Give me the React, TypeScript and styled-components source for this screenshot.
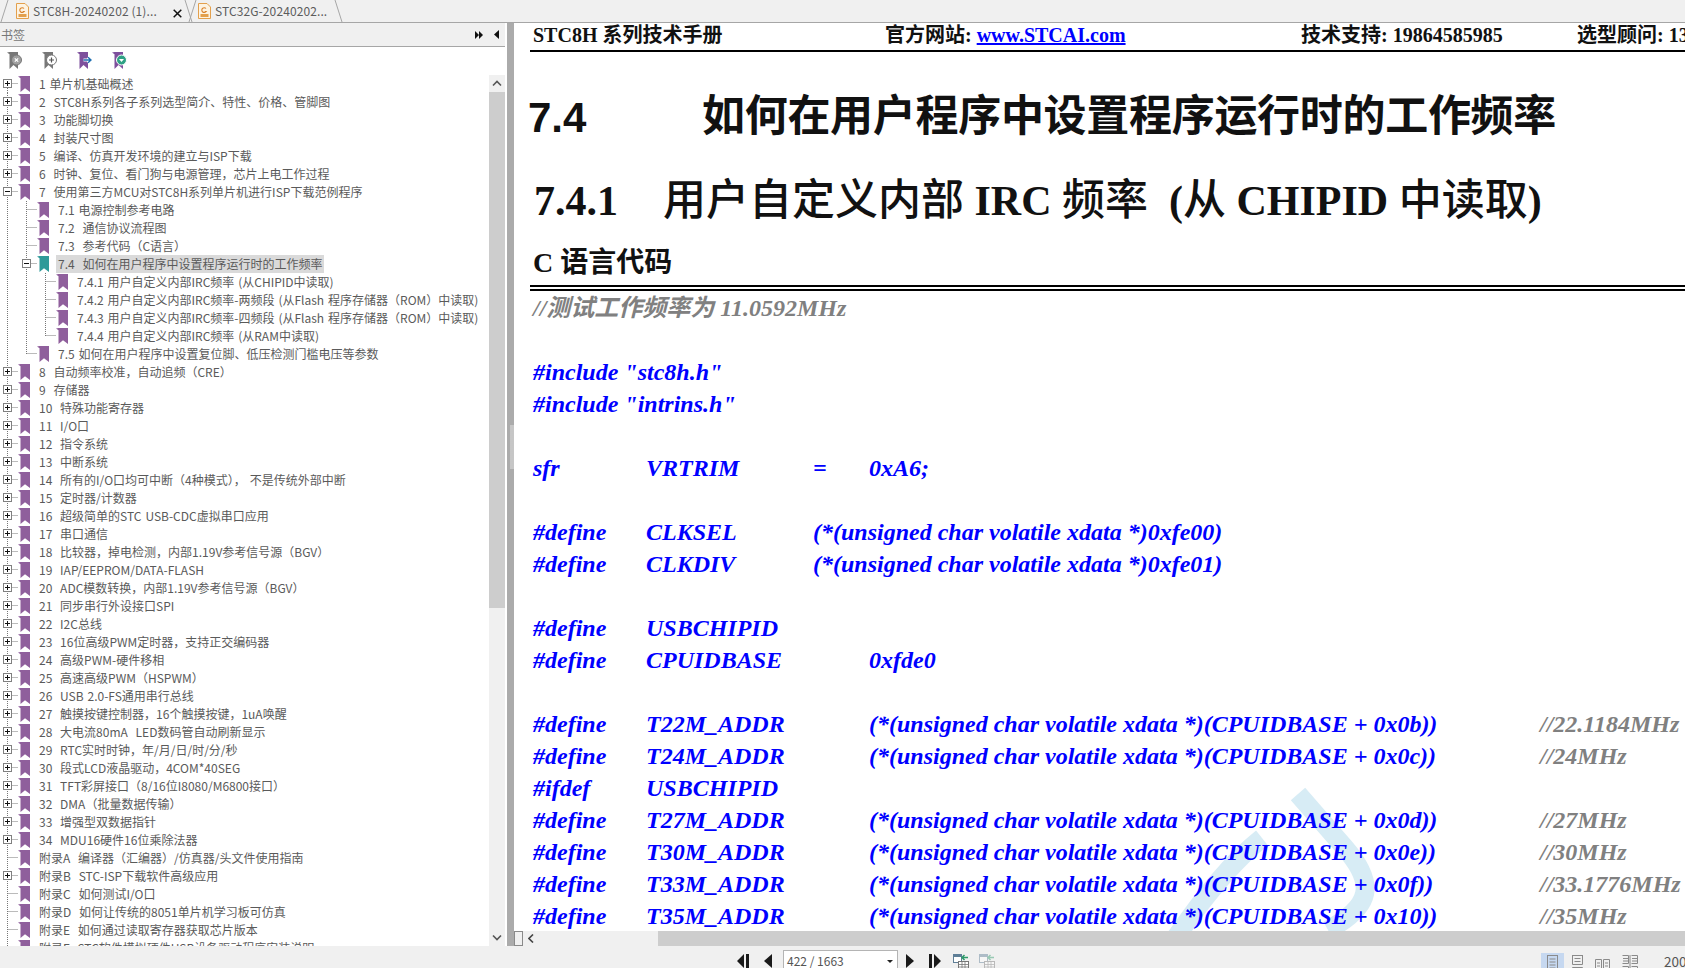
import React from "react";
import styled, { createGlobalStyle } from "styled-components";

const Global = createGlobalStyle`
  html, body { margin: 0; padding: 0; width: 100%; height: 100%; overflow: hidden; background: #fff; }
  #root { width: 100%; height: 100%; }
  * { box-sizing: border-box; }
`;

const UI_FONT = `"Noto Sans CJK SC", "Noto Sans", sans-serif`;
const DOC_FONT = `"Liberation Serif", "Noto Sans CJK SC", serif`;

const Shell = styled.div`
  width: 1685px;
  height: 968px;
  display: flex;
  flex-direction: column;
  overflow: hidden;
  background: #fff;
  font-family: ${UI_FONT};
`;

/* ---------- tabs ---------- */
const TabBar = styled.div`
  height: 23px;
  flex: none;
  display: flex;
  background: #f0f0f0;
  border-bottom: 1px solid #a6a6a6;
`;
const Tab = styled.div<{ $width: number; $overlap?: boolean }>`
  width: ${(p) => p.$width}px;
  height: 22px;
  display: flex;
  align-items: center;
  margin-left: ${(p) => (p.$overlap ? -5 : 0)}px;
`;
const TabLabel = styled.span`
  flex: 1;
  margin-left: 4px;
  font-size: 12px;
  letter-spacing: 0.1px;
  line-height: 22px;
  color: #5c5c5c;
  white-space: nowrap;
`;
const TabIconSlot = styled.span<{ $ml: number }>`
  display: flex;
  margin-left: ${(p) => p.$ml}px;
`;
const CloseSlot = styled.span`
  display: flex;
  margin: 4px 2px 0 0;
`;
const Edge = ({ flip }: { flip?: boolean }) => (
  <svg width="9" height="22" style={{ flex: "none", display: "block" }}>
    <line x1={flip ? 1 : 8} y1="0" x2={flip ? 8 : 1} y2="22" stroke="#a6a6a6" strokeWidth="1" />
  </svg>
);
const PdfIcon = () => (
  <svg width="13" height="16" viewBox="0 0 13 16" style={{ display: "block" }}>
    <path d="M1 .5H9L12.5 4V15.5H.5V.5Z" fill="#fdf3e2" stroke="#e3a04d" />
    <path d="M8 5.5a2.4 2.4 0 1 0 .2 3H6.6" fill="none" stroke="#d9822b" strokeWidth="1.1" />
    <rect x="2.5" y="11" width="8" height="3" fill="#e3a04d" />
  </svg>
);
const CloseIcon = () => (
  <svg width="9" height="9" style={{ display: "block" }}>
    <path d="M.7.7 8.3 8.3M8.3.7.7 8.3" stroke="#111" strokeWidth="1.5" />
  </svg>
);

/* ---------- body ---------- */
const Body = styled.div`
  flex: 1;
  min-height: 0;
  display: flex;
`;
const Sidebar = styled.aside`
  width: 505px;
  margin-right: 2px;
  flex: none;
  display: flex;
  flex-direction: column;
  background: #fff;
`;
const SidebarHeader = styled.div`
  height: 24px;
  flex: none;
  display: flex;
  align-items: center;
  background: #f0f0f0;
  border-bottom: 1px solid #a6a6a6;
  padding: 0 6px 0 1px;
`;
const SidebarTitle = styled.span`
  flex: 1;
  font-size: 12px;
  color: #777;
`;
const HeaderBtn = styled.span<{ $ml?: number }>`
  display: flex;
  margin-left: ${(p) => p.$ml ?? 0}px;
`;
const BookmarkTools = styled.div`
  height: 28px;
  flex: none;
  display: flex;
  align-items: flex-start;
  padding: 5px 0 0 7px;
  gap: 20px;
`;
const TreeArea = styled.div`
  flex: 1;
  min-height: 0;
  display: flex;
`;
const Tree = styled.div`
  flex: 1;
  min-width: 0;
  overflow: hidden;
`;
const Row = styled.div`
  height: 18px;
  display: flex;
  align-items: center;
`;
const Label = styled.span<{ $selected?: boolean }>`
  height: 18px;
  line-height: 18px;
  padding: 0 2px;
  font-size: 12px;
  word-spacing: 1.2px;
  color: #5a5a5a;
  white-space: pre;
  background: ${(p) => (p.$selected ? "#dadada" : "transparent")};
`;
const VScroll = styled.div`
  width: 16px;
  flex: none;
  display: flex;
  flex-direction: column;
  background: #f0f0f0;
`;
const ScrollArrow = styled.div`
  height: 17px;
  flex: none;
  display: flex;
  align-items: center;
  justify-content: center;
`;
const ScrollThumb = styled.div`
  height: 516px;
  flex: none;
  background: #cdcdcd;
`;
const ScrollTrack = styled.div`
  flex: 1;
`;
const Splitter = styled.div`
  width: 7px;
  flex: none;
  background: #ababab;
  display: flex;
  flex-direction: column;
  align-items: flex-end;
  padding-top: 402px;
`;
const Grip = styled.div`
  width: 4px;
  height: 44px;
  background-image: radial-gradient(#e4e4e4 0.6px, transparent 0.8px);
  background-size: 2px 2px;
`;

/* ---------- document ---------- */
const DocPane = styled.main`
  flex: 1;
  min-width: 0;
  display: flex;
  flex-direction: column;
`;
const Page = styled.div`
  position: relative;
  flex: 1;
  min-height: 0;
  overflow: hidden;
  background: #fff;
  padding-left: 16px;
  font-family: ${DOC_FONT};
`;
const Watermark = styled.svg`
  position: absolute;
  left: 616px;
  top: 747px;
`;
const RunHead = styled.header`
  height: 29px;
  display: grid;
  grid-template-columns: 352px 416px 276px 1fr;
  align-items: start;
  padding-left: 3px;
  border-bottom: 2px solid #000;
  font-size: 20px;
  line-height: 25px;
  font-weight: 700;
  color: #111;
  white-space: pre;
`;
const RunLink = styled.a`
  color: #0000ff;
  text-decoration: underline;
`;
const Heading1 = styled.h1`
  margin: 30px 0 0;
  height: 60px;
  display: flex;
  align-items: center;
  font-size: 43px;
  letter-spacing: -0.3px;
  font-weight: 700;
  font-family: "Noto Sans CJK SC", sans-serif;
  color: #111;
  white-space: nowrap;
`;
const Heading1Num = styled.span`
  width: 172px;
  margin: 12px 2px 0 -2px;
  font-family: "Liberation Sans", sans-serif;
  font-size: 42px;
  letter-spacing: 0;
`;
const Heading2 = styled.h2`
  margin: 24px 0 0;
  height: 60px;
  line-height: 60px;
  padding-left: 4px;
  font-size: 42px;
  font-weight: 700;
  font-family: "Liberation Serif", serif;
  color: #111;
  white-space: pre;
`;
const Han = styled.span<{ $gap?: number }>`
  font-family: "Noto Sans CJK SC", sans-serif;
  font-size: 43px;
  font-weight: 500;
  margin-left: ${(p) => p.$gap ?? 0}px;
`;
const Heading3 = styled.h3`
  margin: 14px 0 0;
  height: 44px;
  line-height: 46px;
  padding-left: 3px;
  font-size: 28px;
  font-weight: 700;
  color: #111;
  white-space: pre;
`;
const DoubleRule = styled.hr`
  margin: 1px 0 0;
  height: 6px;
  border: 0;
  border-top: 6px double #000;
`;
const CodeBlock = styled.div`
  position: relative;
`;
const CodeLine = styled.div`
  height: 32px;
  line-height: 34px;
  padding-left: 3px;
  display: grid;
  grid-template-columns: 113px 167px 56px 671px auto;
  font-size: 24px;
  font-weight: 700;
  font-style: italic;
  color: #0000ff;
  white-space: pre;
`;
const Cell = styled.span<{ $col?: string }>`
  grid-column: ${(p) => p.$col ?? "auto"};
`;
const Gray = styled.span<{ $col?: string }>`
  grid-column: ${(p) => p.$col ?? "auto"};
  color: #808080;
`;

const HScroll = styled.div`
  height: 15px;
  flex: none;
  display: flex;
  background: #f0f0f0;
`;
const HBox = styled.div`
  width: 9px;
  flex: none;
  background: #f0f0f0;
  border: 1px solid #8a8a8a;
`;
const HArrow = styled.div`
  width: 135px;
  flex: none;
  display: flex;
  align-items: center;
  padding-left: 5px;
`;
const HThumb = styled.div`
  flex: 1;
  background: #cdcdcd;
`;

/* ---------- status ---------- */
const StatusBar = styled.footer`
  height: 22px;
  flex: none;
  display: flex;
  background: #f0f0f0;
  overflow: hidden;
  padding-left: 737px;
`;
const NavBtn = styled.span<{ $ml?: number }>`
  display: flex;
  margin: 8px 0 0 ${(p) => p.$ml ?? 0}px;
`;
const PageCombo = styled.div`
  margin: 4px 0 0 11px;
  width: 115px;
  height: 26px;
  flex: none;
  display: flex;
  justify-content: space-between;
  padding: 1px 4px 0 3px;
  background: #fff;
  border: 1px solid #b4b4b4;
  font-size: 12px;
  line-height: 18px;
  color: #555;
  white-space: pre;
`;
const ComboCaret = styled.span`
  width: 0;
  height: 0;
  margin-top: 8px;
  border-left: 3px solid transparent;
  border-right: 3px solid transparent;
  border-top: 3px solid #222;
`;
const ViewBtn = styled.span<{ $active?: boolean; $ml: number }>`
  width: 23px;
  height: 20px;
  flex: none;
  margin: 7px 0 0 ${(p) => p.$ml}px;
  display: flex;
  justify-content: center;
  padding-top: 2px;
  background: ${(p) => (p.$active ? "#c6d8f0" : "transparent")};
`;
const ZoomText = styled.span`
  margin: 6px 0 0 23px;
  font-size: 13.5px;
  line-height: 18px;
  color: #555;
`;

/* ---------- drawn icons ---------- */
const BM_PATH = "M0 .5 2.5 0H12V16L7 12.2 2.5 16V2.2Z";
const Bookmark = ({ selected }: { selected?: boolean }) => (
  <svg width="12" height="16" viewBox="0 0 12 16" style={{ flex: "none", display: "block", marginLeft: -1, marginRight: 7 }}>
    <path d={BM_PATH} fill={selected ? "#2f9a99" : "#8f5f9c"} />
  </svg>
);

type Conn = "plus" | "minus" | "branch" | "end" | "guide" | "none";
const dot = { stroke: "#777", strokeWidth: 1, strokeDasharray: "1 1" };
const Connector = ({ kind, first }: { kind: Conn; first?: boolean }) => (
  <svg width="19" height="18" viewBox="0 0 19 18" style={{ flex: "none", display: "block" }}>
    {kind !== "none" && (
      <line x1="7.5" y1={first ? 9 : 0} x2="7.5" y2={kind === "end" ? 9 : 18} {...dot} />
    )}
    {kind !== "guide" && kind !== "none" && <line x1="7.5" y1="8.5" x2="18" y2="8.5" {...dot} />}
    {(kind === "plus" || kind === "minus") && (
      <>
        <rect x="3.5" y="4.5" width="8" height="8" fill="#fff" stroke="#808080" />
        <line x1="5" y1="8.5" x2="10" y2="8.5" stroke="#111" />
        {kind === "plus" && <line x1="7.5" y1="6" x2="7.5" y2="11" stroke="#111" />}
      </>
    )}
  </svg>
);

const ToolIcon = ({ fill, children }: { fill: string; children: React.ReactNode }) => (
  <svg width="15" height="17" viewBox="0 0 15 17" style={{ display: "block" }}>
    <path d="M0 .5 2.5 0H11V17L6.5 13 2.5 17V2.2Z" fill={fill} />
    {children}
  </svg>
);
const ToolGray = ({ plus }: { plus?: boolean }) => (
  <ToolIcon fill="#777">
    <circle cx="9.5" cy="8" r="5" fill={plus ? "#fff" : "#a0a0a0"} stroke="#777" />
    {plus ? (
      <path d="M7 8H12M9.5 5.5V10.5" stroke="#555" strokeWidth="1.2" />
    ) : (
      <path d="M7.8 6.3 11.2 9.7M11.2 6.3 7.8 9.7" stroke="#fff" strokeWidth="1.2" />
    )}
  </ToolIcon>
);
const ToolArrow = () => (
  <ToolIcon fill="#7d4f9c">
    <path d="M6.5 8H14M11 5.2 14 8 11 10.8" stroke="#fff" strokeWidth="3" fill="none" />
    <path d="M6.5 8H14M11 5.2 14 8 11 10.8" stroke="#1f6fb0" strokeWidth="1.4" fill="none" />
  </ToolIcon>
);
const ToolCheck = () => (
  <ToolIcon fill="#7d4f9c">
    <circle cx="9.5" cy="8" r="5" fill="#2fa184" stroke="#fff" />
    <path d="M7 7 9.5 10 12 7Z" fill="#fff" />
  </ToolIcon>
);

const Tri = ({ left, bar, size = 14 }: { left?: boolean; bar?: boolean; size?: number }) => {
  const w = bar ? 12 : 8;
  const shape = left
    ? bar
      ? "M7 0V14L0 7Z M9 0H12V14H9Z"
      : "M8 0V14L0 7Z"
    : bar
      ? "M0 0H3V14H0Z M5 0 12 7 5 14Z"
      : "M0 0 8 7 0 14Z";
  return (
    <svg width={w} height={size} viewBox={`0 0 ${w} 14`} style={{ display: "block" }}>
      <path d={shape} fill="#1a1a1a" />
    </svg>
  );
};
const TableIcon = ({ faded }: { faded?: boolean }) => (
  <svg width="16" height="16" viewBox="0 0 16 16" style={{ display: "block", opacity: faded ? 0.45 : 1 }}>
    <rect x=".5" y=".5" width="8" height="8" fill="#fff" stroke="#5f7f97" />
    <rect x=".5" y=".5" width="8" height="2.5" fill="#5f7f97" />
    <rect x="5.5" y="7.5" width="10" height="8" fill="#fff" stroke="#777" />
    <path d="M5.5 10.5H15.5M5.5 13H15.5M9 7.5V15.5M12 7.5V15.5" stroke="#777" strokeWidth=".8" />
    <path d="M15 3.5H9M11.5 1 9 3.5 11.5 6" stroke="#2f9a6a" strokeWidth="1.5" fill="none" />
  </svg>
);
const SinglePage = () => (
  <svg width="11" height="18" viewBox="0 0 11 18" style={{ display: "block" }}>
    <rect x=".5" y=".5" width="10" height="17" fill="none" stroke="#8a8a8a" />
    <path d="M2.5 4H8.5M2.5 7H8.5M2.5 10H8.5M2.5 13H8.5" stroke="#8a8a8a" />
  </svg>
);
const ContinuousPage = () => (
  <svg width="11" height="18" viewBox="0 0 11 18" style={{ display: "block" }}>
    <path d="M.5 0V9.5H10.5V0M.5 18V12.5H10.5V18M.5 .5H10.5M2.5 3.5H8.5M2.5 6.5H8.5" fill="none" stroke="#8a8a8a" />
  </svg>
);
const FacingPage = () => (
  <svg width="15" height="18" viewBox="0 0 15 18" style={{ display: "block" }}>
    <path d="M.5 4.5H6.5V16.5H.5ZM8.5 4.5H14.5V16.5H8.5ZM2 8H5M2 11H5M10 8H13M10 11H13" fill="none" stroke="#8a8a8a" />
  </svg>
);
const ContFacingPage = () => (
  <svg width="16" height="18" viewBox="0 0 16 18" style={{ display: "block" }}>
    <path d="M.5 .5H6.5V8.5H.5M9.5 .5H15.5V8.5H9.5M.5 11.5H6.5V18M9.5 11.5H15.5V18M1 3.5H6M1 6H6M10 3.5H15M10 6H15M8 0V18" fill="none" stroke="#8a8a8a" />
  </svg>
);

/* ---------- data ---------- */
type Item = { text: string; level: number; conn: Conn; selected?: boolean; guides?: Conn[] };
const top = (text: string, conn: Conn = "plus"): Item => ({ text, level: 0, conn });
const items: Item[] = [
  top("1 单片机基础概述"),
  top("2  STC8H系列各子系列选型简介、特性、价格、管脚图"),
  top("3  功能脚切换"),
  top("4  封装尺寸图"),
  top("5  编译、仿真开发环境的建立与ISP下载"),
  top("6  时钟、复位、看门狗与电源管理，芯片上电工作过程"),
  top("7  使用第三方MCU对STC8H系列单片机进行ISP下载范例程序", "minus"),
  { text: "7.1 电源控制参考电路", level: 1, conn: "branch", guides: ["guide"] },
  { text: "7.2  通信协议流程图", level: 1, conn: "branch", guides: ["guide"] },
  { text: "7.3  参考代码（C语言）", level: 1, conn: "branch", guides: ["guide"] },
  { text: "7.4  如何在用户程序中设置程序运行时的工作频率", level: 1, conn: "minus", selected: true, guides: ["guide"] },
  { text: "7.4.1 用户自定义内部IRC频率 (从CHIPID中读取)", level: 2, conn: "branch", guides: ["guide", "guide"] },
  { text: "7.4.2 用户自定义内部IRC频率-两频段 (从Flash 程序存储器（ROM）中读取)", level: 2, conn: "branch", guides: ["guide", "guide"] },
  { text: "7.4.3 用户自定义内部IRC频率-四频段 (从Flash 程序存储器（ROM）中读取)", level: 2, conn: "branch", guides: ["guide", "guide"] },
  { text: "7.4.4 用户自定义内部IRC频率 (从RAM中读取)", level: 2, conn: "end", guides: ["guide", "guide"] },
  { text: "7.5 如何在用户程序中设置复位脚、低压检测门槛电压等参数", level: 1, conn: "end", guides: ["guide"] },
  top("8  自动频率校准，自动追频（CRE）"),
  top("9  存储器"),
  top("10  特殊功能寄存器"),
  top("11  I/O口"),
  top("12  指令系统"),
  top("13  中断系统"),
  top("14  所有的I/O口均可中断（4种模式）， 不是传统外部中断"),
  top("15  定时器/计数器"),
  top("16  超级简单的STC USB-CDC虚拟串口应用"),
  top("17  串口通信"),
  top("18  比较器，掉电检测，内部1.19V参考信号源（BGV）"),
  top("19  IAP/EEPROM/DATA-FLASH"),
  top("20  ADC模数转换，内部1.19V参考信号源（BGV）"),
  top("21  同步串行外设接口SPI"),
  top("22  I2C总线"),
  top("23  16位高级PWM定时器，支持正交编码器"),
  top("24  高级PWM-硬件移相"),
  top("25  高速高级PWM（HSPWM）"),
  top("26  USB 2.0-FS通用串行总线"),
  top("27  触摸按键控制器，16个触摸按键，1uA唤醒"),
  top("28  大电流80mA  LED数码管自动刷新显示"),
  top("29  RTC实时时钟，年/月/日/时/分/秒"),
  top("30  段式LCD液晶驱动，4COM*40SEG"),
  top("31  TFT彩屏接口（8/16位I8080/M6800接口）"),
  top("32  DMA（批量数据传输）"),
  top("33  增强型双数据指针"),
  top("34  MDU16硬件16位乘除法器"),
  top("附录A  编译器（汇编器）/仿真器/头文件使用指南", "branch"),
  top("附录B  STC-ISP下载软件高级应用"),
  top("附录C  如何测试I/O口", "branch"),
  top("附录D  如何让传统的8051单片机学习板可仿真", "branch"),
  top("附录E  如何通过读取寄存器获取芯片版本", "branch"),
  top("附录F  STC软件模拟硬件USB设备驱动程序安装说明", "branch"),
];

type Line = { kw?: string; name?: string; mid?: string; value?: string; note?: string };
const Q = (s: string) => `(*(unsigned char volatile xdata *)(CPUIDBASE + ${s}))`;
const lines: Line[] = [
  {},
  { kw: `#include "stc8h.h"` },
  { kw: `#include "intrins.h"` },
  {},
  { kw: "sfr", name: "VRTRIM", mid: "=", value: "0xA6;" },
  {},
  { kw: "#define", name: "CLKSEL", mid: "(*(unsigned char volatile xdata *)0xfe00)" },
  { kw: "#define", name: "CLKDIV", mid: "(*(unsigned char volatile xdata *)0xfe01)" },
  {},
  { kw: "#define", name: "USBCHIPID" },
  { kw: "#define", name: "CPUIDBASE", value: "0xfde0" },
  {},
  { kw: "#define", name: "T22M_ADDR", value: Q("0x0b"), note: "//22.1184MHz" },
  { kw: "#define", name: "T24M_ADDR", value: Q("0x0c"), note: "//24MHz" },
  { kw: "#ifdef", name: "USBCHIPID" },
  { kw: "#define", name: "T27M_ADDR", value: Q("0x0d"), note: "//27MHz" },
  { kw: "#define", name: "T30M_ADDR", value: Q("0x0e"), note: "//30MHz" },
  { kw: "#define", name: "T33M_ADDR", value: Q("0x0f"), note: "//33.1776MHz" },
  { kw: "#define", name: "T35M_ADDR", value: Q("0x10"), note: "//35MHz" },
];

const Chevron = ({ d }: { d: string }) => (
  <svg width="10" height="7" viewBox="0 0 10 7" style={{ display: "block" }}>
    <path d={d} fill="none" stroke="#555" strokeWidth="1.6" />
  </svg>
);

export default function App() {
  return (
    <Shell>
      <Global />
      <TabBar>
        <Tab $width={193}>
          <Edge />
          <TabIconSlot $ml={7}><PdfIcon /></TabIconSlot>
          <TabLabel>STC8H-20240202 (1)...</TabLabel>
          <CloseSlot><CloseIcon /></CloseSlot>
          <Edge flip />
        </Tab>
        <Tab $width={155} $overlap>
          <Edge />
          <TabIconSlot $ml={1}><PdfIcon /></TabIconSlot>
          <TabLabel>STC32G-20240202...</TabLabel>
          <Edge flip />
        </Tab>
      </TabBar>
      <Body>
        <Sidebar>
          <SidebarHeader>
            <SidebarTitle>书签</SidebarTitle>
            <HeaderBtn>
              <svg width="9" height="8" style={{ display: "block" }}>
                <path d="M0 0 4 4 0 8ZM4 0 8 4 4 8Z" fill="#111" />
              </svg>
            </HeaderBtn>
            <HeaderBtn $ml={10}>
              <svg width="5" height="9" style={{ display: "block" }}>
                <path d="M5 0V9L0 4.5Z" fill="#111" />
              </svg>
            </HeaderBtn>
          </SidebarHeader>
          <BookmarkTools>
            <ToolGray />
            <ToolGray plus />
            <ToolArrow />
            <ToolCheck />
          </BookmarkTools>
          <TreeArea>
            <Tree>
              {items.map((it, i) => (
                <Row key={it.text}>
                  {(it.guides ?? []).map((g, j) => (
                    <Connector key={j} kind={g} />
                  ))}
                  <Connector kind={it.conn} first={i === 0} />
                  <Bookmark selected={it.selected} />
                  <Label $selected={it.selected}>{it.text}</Label>
                </Row>
              ))}
            </Tree>
            <VScroll>
              <ScrollArrow><Chevron d="M1 5.5 5 1.5 9 5.5" /></ScrollArrow>
              <ScrollThumb />
              <ScrollTrack />
              <ScrollArrow><Chevron d="M1 1.5 5 5.5 9 1.5" /></ScrollArrow>
            </VScroll>
          </TreeArea>
        </Sidebar>
        <Splitter><Grip /></Splitter>
        <DocPane>
          <Page>
            <Watermark width="280" height="170" viewBox="1130 770 280 170">
              <path
                d="M1298 794 L1345 848 C1376 884 1372 906 1328 930"
                fill="none"
                stroke="#d7ecf5"
                strokeWidth="19"
              />
              <path
                d="M1262 838 C1232 862 1205 895 1174 940"
                fill="none"
                stroke="#d7ecf5"
                strokeWidth="19"
              />
            </Watermark>
            <RunHead>
              <span>STC8H 系列技术手册</span>
              <span>
                官方网站: <RunLink href="#">www.STCAI.com</RunLink>
              </span>
              <span>技术支持: 19864585985</span>
              <span>选型顾问: 13</span>
            </RunHead>
            <Heading1>
              <Heading1Num>7.4</Heading1Num>
              如何在用户程序中设置程序运行时的工作频率
            </Heading1>
            <Heading2>
              7.4.1<Han $gap={45}>用户自定义内部</Han> IRC <Han>频率</Han>  (<Han>从</Han> CHIPID <Han>中读取</Han>)
            </Heading2>
            <Heading3>C 语言代码</Heading3>
            <DoubleRule />
            <CodeBlock>
              <CodeLine>
                <Gray $col="1 / 5">//测试工作频率为 11.0592MHz</Gray>
              </CodeLine>
              {lines.map((l, i) => (
                <CodeLine key={i}>
                  {l.name || !l.kw ? <Cell $col="1">{l.kw}</Cell> : <Cell $col="1 / 5">{l.kw}</Cell>}
                  {l.name && <Cell $col="2">{l.name}</Cell>}
                  {l.mid && <Cell $col={l.value ? "3" : "3 / 5"}>{l.mid}</Cell>}
                  {l.value && <Cell $col="4">{l.value}</Cell>}
                  {l.note && <Gray $col="5">{l.note}</Gray>}
                </CodeLine>
              ))}
            </CodeBlock>
          </Page>
          <HScroll>
            <HBox />
            <HArrow>
              <svg width="6" height="9" style={{ display: "block" }}>
                <path d="M5 .5 1 4.5 5 8.5" fill="none" stroke="#444" strokeWidth="1.6" />
              </svg>
            </HArrow>
            <HThumb />
          </HScroll>
        </DocPane>
      </Body>
      <StatusBar>
        <NavBtn><Tri left bar /></NavBtn>
        <NavBtn $ml={15}><Tri left /></NavBtn>
        <PageCombo>
          <span>422 / 1663</span>
          <ComboCaret />
        </PageCombo>
        <NavBtn $ml={8}><Tri /></NavBtn>
        <NavBtn $ml={15}><Tri bar /></NavBtn>
        <NavBtn $ml={12}><TableIcon /></NavBtn>
        <NavBtn $ml={10}><TableIcon faded /></NavBtn>
        <ViewBtn $active $ml={546}><SinglePage /></ViewBtn>
        <ViewBtn $ml={2}><ContinuousPage /></ViewBtn>
        <ViewBtn $ml={2}><FacingPage /></ViewBtn>
        <ViewBtn $ml={4}><ContFacingPage /></ViewBtn>
        <ZoomText>200</ZoomText>
      </StatusBar>
    </Shell>
  );
}
